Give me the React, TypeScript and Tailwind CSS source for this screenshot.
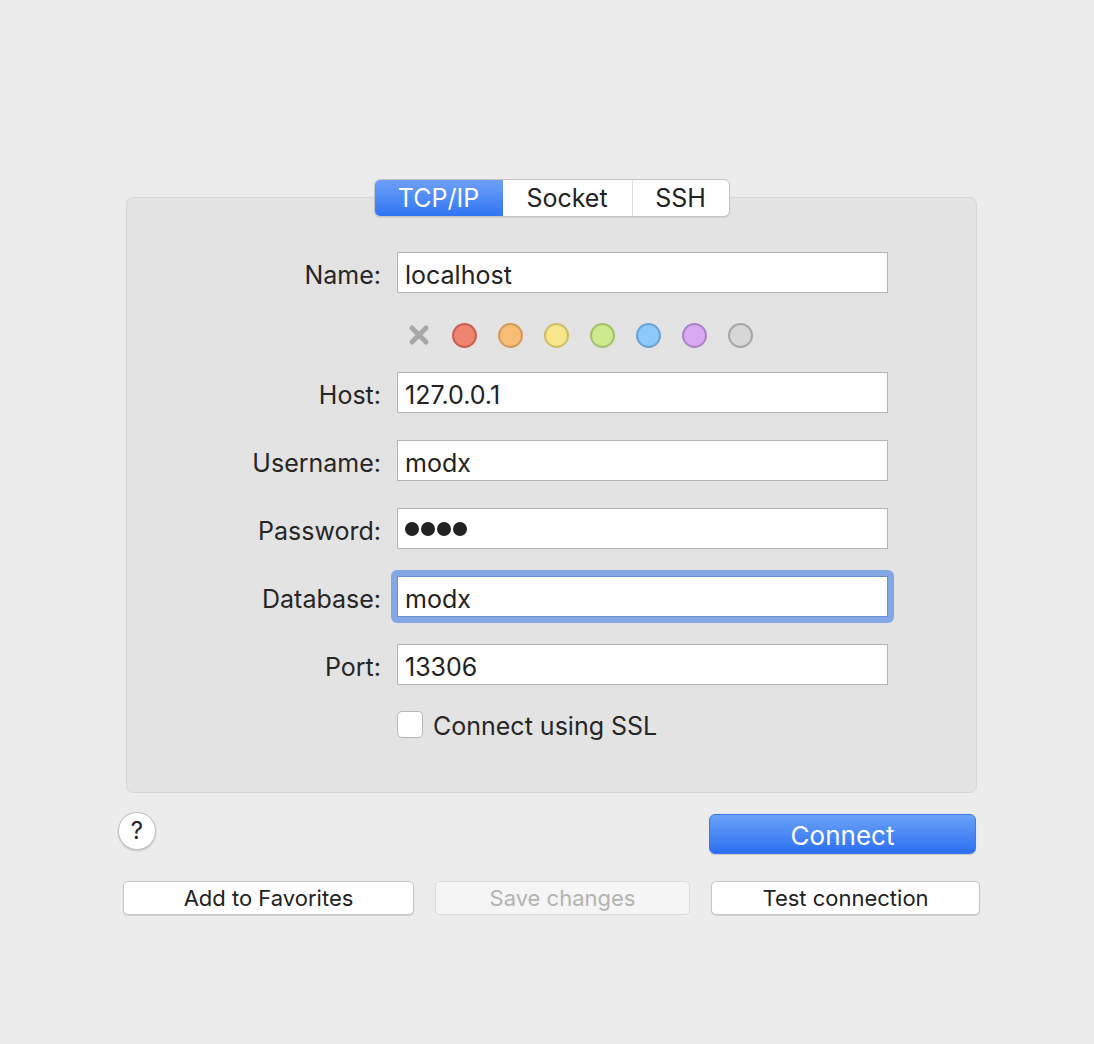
import React from 'react';

const font = { fontFamily: 'Inter, "Noto Sans", sans-serif' };

const colorTags = [
  { fill: 'bg-[#ef8471]', ring: 'border-[#c8604f]' },
  { fill: 'bg-[#f7bd75]', ring: 'border-[#d39a5b]' },
  { fill: 'bg-[#f7e68b]', ring: 'border-[#cdbd63]' },
  { fill: 'bg-[#cdea8f]', ring: 'border-[#a2c16a]' },
  { fill: 'bg-[#8dc9fa]', ring: 'border-[#6aa3d6]' },
  { fill: 'bg-[#d9aaf2]', ring: 'border-[#ad82c6]' },
  { fill: 'bg-[#d7d7d7]', ring: 'border-[#a6a6a6]' },
];

interface FieldProps {
  label: string;
  value: React.ReactNode;
  focused?: boolean;
  className?: string;
}

const Field: React.FC<FieldProps> = ({ label, value, focused = false, className = '' }) => (
  <div className={`flex items-center ${className}`}>
    <div className="w-[255px] text-right text-[25px] leading-none pt-[6px] text-[#262626] pr-[1px]">{label}</div>
    <div className="ml-[15px] relative">
      {focused && (
        <div className="absolute -inset-[6px] rounded-[6px] bg-[#84a8e6]"></div>
      )}
      <div
        className={`relative w-[491px] h-[41px] bg-white border flex items-center px-[7px] pt-[5px] text-[25px] leading-none text-[#222] ${
          focused ? 'border-[#6b8fd6]' : 'border-[#b4b4b4]'
        }`}
      >
        {value}
      </div>
    </div>
  </div>
);

const PasswordDots: React.FC = () => (
  <div className="flex items-center gap-[2px] -mt-[5px]">
    {[0, 1, 2, 3].map((i) => (
      <div key={i} className="w-[14px] h-[14px] rounded-full bg-[#222]"></div>
    ))}
  </div>
);

const App: React.FC = () => {
  return (
    <div className="min-h-screen w-full bg-[#ececec] pt-[179px] h-[1044px]" style={font}>
      {/* Connection panel */}
      <div className="ml-[126px] w-[851px]">
        {/* Tabs */}
        <div className="relative z-10 flex justify-center">
          <div className="flex h-[38px] rounded-[6px] border border-[#c4c4c4] bg-white overflow-hidden shadow-[0_1px_1px_rgba(0,0,0,0.08)]">
            <div className="w-[128px] flex items-center justify-center pt-[2px] text-[25px] text-white bg-gradient-to-b from-[#6ea0f7] to-[#2f74f3]">
              TCP/IP
            </div>
            <div className="w-[130px] flex items-center justify-center pt-[2px] text-[25px] text-[#222] border-r border-[#dcdcdc]">
              Socket
            </div>
            <div className="w-[96px] flex items-center justify-center pt-[2px] text-[25px] text-[#222]">
              SSH
            </div>
          </div>
        </div>

        <div className="-mt-[20px] h-[596px] rounded-[7px] border border-[#d6d6d6] bg-[#e3e3e3] pt-[54px]">
          <Field label="Name:" value="localhost" />

          {/* Colour tags */}
          <div className="mt-[29px] ml-[270px] flex items-center h-[26px]">
            <div className="w-[44px] flex items-center justify-center">
              <svg width="22" height="22" viewBox="0 0 22 22">
                <path d="M4 4 L18 18 M18 4 L4 18" stroke="#a8a8a8" strokeWidth="5" strokeLinecap="round" />
              </svg>
            </div>
            {colorTags.map((c, i) => (
              <div key={i} className="w-[46px] flex items-center justify-center">
                <div className={`w-[25px] h-[25px] rounded-full border-2 ${c.fill} ${c.ring}`}></div>
              </div>
            ))}
          </div>

          <Field label="Host:" value="127.0.0.1" className="mt-[24px]" />
          <Field label="Username:" value="modx" className="mt-[27px]" />
          <Field label="Password:" value={<PasswordDots />} className="mt-[27px]" />
          <Field label="Database:" value="modx" focused className="mt-[27px]" />
          <Field label="Port:" value="13306" className="mt-[27px]" />

          {/* SSL */}
          <div className="mt-[26px] ml-[270px] flex items-center h-[27px]">
            <div className="w-[26px] h-[27px] rounded-[5px] border border-[#b6b6b6] bg-white"></div>
            <span className="ml-[10px] text-[25px] leading-none pt-[3px] text-[#262626]">Connect using SSL</span>
          </div>
        </div>
      </div>

      {/* Help + Connect */}
      <div className="mt-[21px] ml-[118px] w-[858px] flex items-center">
        <div className="w-[38px] h-[38px] -mt-[6px] rounded-full bg-white border border-[#c2c2c2] shadow-[0_1px_2px_rgba(0,0,0,0.2)] flex items-center justify-center text-[24px] text-[#222]">
          ?
        </div>
        <div className="ml-auto w-[267px] h-[40px] rounded-[6px] bg-gradient-to-b from-[#6ba2f8] to-[#2c6ef1] border border-[#3a78ee] flex items-center justify-center pt-[2px] text-[26px] text-white shadow-[0_1px_1px_rgba(0,0,0,0.15)]">
          Connect
        </div>
      </div>

      {/* Bottom actions */}
      <div className="mt-[27px] ml-[123px] flex items-center gap-[21px]">
        <div className="w-[291px] h-[34px] rounded-[5px] bg-white border border-[#c6c6c6] shadow-[0_1px_1px_rgba(0,0,0,0.12)] flex items-center justify-center text-[22px] text-[#222]">
          Add to Favorites
        </div>
        <div className="w-[255px] h-[34px] rounded-[5px] bg-[#f5f5f5] border border-[#dadada] flex items-center justify-center text-[22px] text-[#b3b3b3]">
          Save changes
        </div>
        <div className="w-[269px] h-[34px] rounded-[5px] bg-white border border-[#c6c6c6] shadow-[0_1px_1px_rgba(0,0,0,0.12)] flex items-center justify-center text-[22px] text-[#222]">
          Test connection
        </div>
      </div>
    </div>
  );
};

export default App;
